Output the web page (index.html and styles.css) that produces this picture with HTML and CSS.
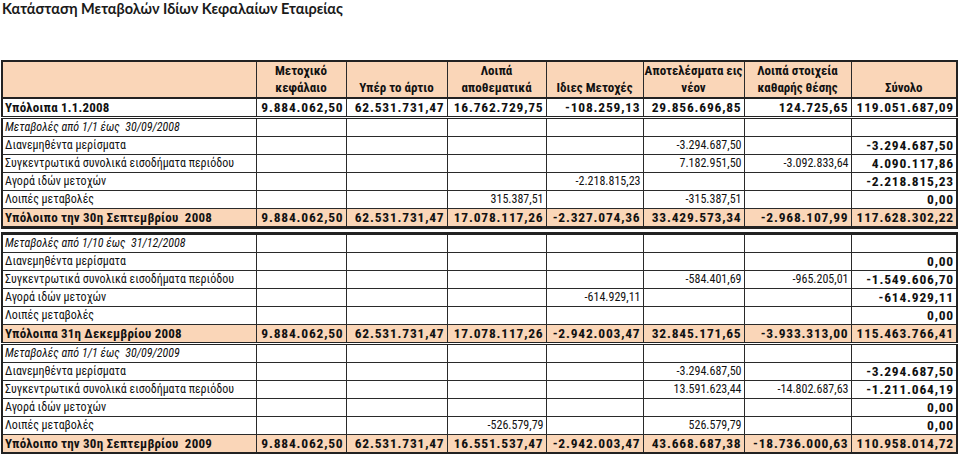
FILE: index.html
```html
<!DOCTYPE html>
<html lang="el">
<head>
<meta charset="utf-8">
<title>Κατάσταση Μεταβολών Ιδίων Κεφαλαίων Εταιρείας</title>
<link rel="stylesheet" href="styles.css">
</head>
<body>
<h1 class="title">Κατάσταση Μεταβολών Ιδίων Κεφαλαίων Εταιρείας</h1>
<table class="sheet">
<colgroup>
<col class="c0"><col class="c1"><col class="c2"><col class="c3"><col class="c4"><col class="c5"><col class="c6"><col class="c7">
</colgroup>
<thead>
<tr class="head">
<th></th>
<th>Μετοχικό<br>κεφάλαιο</th>
<th>Υπέρ το άρτιο</th>
<th>Λοιπά<br>αποθεματικά</th>
<th>Ιδιες Μετοχές</th>
<th>Αποτελέσματα εις<br>νέον</th>
<th>Λοιπά στοιχεία<br>καθαρής θέσης</th>
<th>Σύνολο</th>
</tr>
</thead>
<tbody>
<tr class="bal dbl">
<td class="lbl">Υπόλοιπα 1.1.2008</td>
<td>9.884.062,50</td><td>62.531.731,47</td><td>16.762.729,75</td><td>-108.259,13</td><td>29.856.696,85</td><td>124.725,65</td><td>119.051.687,09</td>
</tr>
<tr class="it">
<td class="lbl">Μεταβολές από 1/1 έως &nbsp;30/09/2008</td>
<td></td><td></td><td></td><td></td><td></td><td></td><td></td>
</tr>
<tr>
<td class="lbl">Διανεμηθέντα μερίσματα</td>
<td></td><td></td><td></td><td></td><td>-3.294.687,50</td><td></td><td class="tot">-3.294.687,50</td>
</tr>
<tr>
<td class="lbl">Συγκεντρωτικά συνολικά εισοδήματα περιόδου</td>
<td></td><td></td><td></td><td></td><td>7.182.951,50</td><td>-3.092.833,64</td><td class="tot">4.090.117,86</td>
</tr>
<tr>
<td class="lbl">Αγορά ιδών μετοχών</td>
<td></td><td></td><td></td><td>-2.218.815,23</td><td></td><td></td><td class="tot">-2.218.815,23</td>
</tr>
<tr>
<td class="lbl">Λοιπές μεταβολές</td>
<td></td><td></td><td>315.387,51</td><td></td><td>-315.387,51</td><td></td><td class="tot">0,00</td>
</tr>
<tr class="sub gap">
<td class="lbl">Υπόλοιπο την 30η Σεπτεμβρίου &nbsp;2008</td>
<td>9.884.062,50</td><td>62.531.731,47</td><td>17.078.117,26</td><td>-2.327.074,36</td><td>33.429.573,34</td><td>-2.968.107,99</td><td>117.628.302,22</td>
</tr>
<tr class="it">
<td class="lbl">Μεταβολές από 1/10 έως &nbsp;31/12/2008</td>
<td></td><td></td><td></td><td></td><td></td><td></td><td></td>
</tr>
<tr>
<td class="lbl">Διανεμηθέντα μερίσματα</td>
<td></td><td></td><td></td><td></td><td></td><td></td><td class="tot">0,00</td>
</tr>
<tr>
<td class="lbl">Συγκεντρωτικά συνολικά εισοδήματα περιόδου</td>
<td></td><td></td><td></td><td></td><td>-584.401,69</td><td>-965.205,01</td><td class="tot">-1.549.606,70</td>
</tr>
<tr>
<td class="lbl">Αγορά ιδών μετοχών</td>
<td></td><td></td><td></td><td>-614.929,11</td><td></td><td></td><td class="tot">-614.929,11</td>
</tr>
<tr>
<td class="lbl">Λοιπές μεταβολές</td>
<td></td><td></td><td></td><td></td><td></td><td></td><td class="tot">0,00</td>
</tr>
<tr class="sub dbl">
<td class="lbl">Υπόλοιπα 31η Δεκεμβρίου 2008</td>
<td>9.884.062,50</td><td>62.531.731,47</td><td>17.078.117,26</td><td>-2.942.003,47</td><td>32.845.171,65</td><td>-3.933.313,00</td><td>115.463.766,41</td>
</tr>
<tr class="it">
<td class="lbl">Μεταβολές από 1/1 έως &nbsp;30/09/2009</td>
<td></td><td></td><td></td><td></td><td></td><td></td><td></td>
</tr>
<tr>
<td class="lbl">Διανεμηθέντα μερίσματα</td>
<td></td><td></td><td></td><td></td><td>-3.294.687,50</td><td></td><td class="tot">-3.294.687,50</td>
</tr>
<tr>
<td class="lbl">Συγκεντρωτικά συνολικά εισοδήματα περιόδου</td>
<td></td><td></td><td></td><td></td><td>13.591.623,44</td><td>-14.802.687,63</td><td class="tot">-1.211.064,19</td>
</tr>
<tr>
<td class="lbl">Αγορά ιδών μετοχών</td>
<td></td><td></td><td></td><td></td><td></td><td></td><td class="tot">0,00</td>
</tr>
<tr>
<td class="lbl">Λοιπές μεταβολές</td>
<td></td><td></td><td>-526.579,79</td><td></td><td>526.579,79</td><td></td><td class="tot">0,00</td>
</tr>
<tr class="sub">
<td class="lbl">Υπόλοιπο την 30η Σεπτεμβρίου &nbsp;2009</td>
<td>9.884.062,50</td><td>62.531.731,47</td><td>16.551.537,47</td><td>-2.942.003,47</td><td>43.668.687,38</td><td>-18.736.000,63</td><td>110.958.014,72</td>
</tr>
</tbody>
</table>
</body>
</html>
```
FILE: styles.css
```css
html, body {
  margin: 0;
  padding: 0;
  background: #ffffff;
}
body {
  font-family: "Roboto Condensed", "Open Sans Condensed", "Arial Narrow", "Liberation Sans Narrow", "Open Sans", sans-serif;
  font-stretch: condensed;
  color: #111111;
}
.title {
  margin: 0;
  padding: 1px 0 0 2px;
  height: 59px;
  box-sizing: content-box;
  font-family: Lato, "Open Sans", sans-serif;
  font-stretch: normal;
  font-weight: 700;
  font-size: 14.5px;
  line-height: 16px;
  color: #1a1a1a;
}
.sheet {
  border-collapse: collapse;
  table-layout: fixed;
  width: 955px;
  margin-left: 1px;
  border: 2px solid #222222;
}
.c0 { width: 254px; }
.c1 { width: 90px; }
.c2 { width: 101px; }
.c3 { width: 99px; }
.c4 { width: 97px; }
.c5 { width: 101px; }
.c6 { width: 107px; }
.c7 { width: 106px; }
.sheet th,
.sheet td {
  border: 1px solid #2a2a2a;
  padding: 0 2px;
  overflow: hidden;
  white-space: nowrap;
}
.head th {
  background: #fad6b8;
  height: 33px;
  vertical-align: bottom;
  text-align: center;
  font-size: 13px;
  font-weight: 700;
  line-height: 17px;
  padding: 0 1px 1px;
  border-bottom: 2px solid #222222;
}
.sheet td {
  height: 17px;
  font-size: 12px;
  line-height: 17px;
  text-align: right;
  vertical-align: middle;
}
.sheet td.lbl {
  text-align: left;
  font-size: 12px;
}
.sheet td.tot {
  font-weight: 700;
  font-size: 13.5px;
  letter-spacing: 0.8px;
}
.bal td,
.sub td {
  font-weight: 700;
  font-size: 13.5px;
  letter-spacing: 0.8px;
}
.sheet .bal td.lbl,
.sheet .sub td.lbl {
  font-size: 13px;
  letter-spacing: 0.2px;
}
.sub td {
  background: #fad6b8;
}
.it td.lbl {
  font-style: italic;
}
.dbl td {
  border-bottom: 3px double #222222;
}
.gap td {
  border-bottom: 9px double #222222;
}
```
